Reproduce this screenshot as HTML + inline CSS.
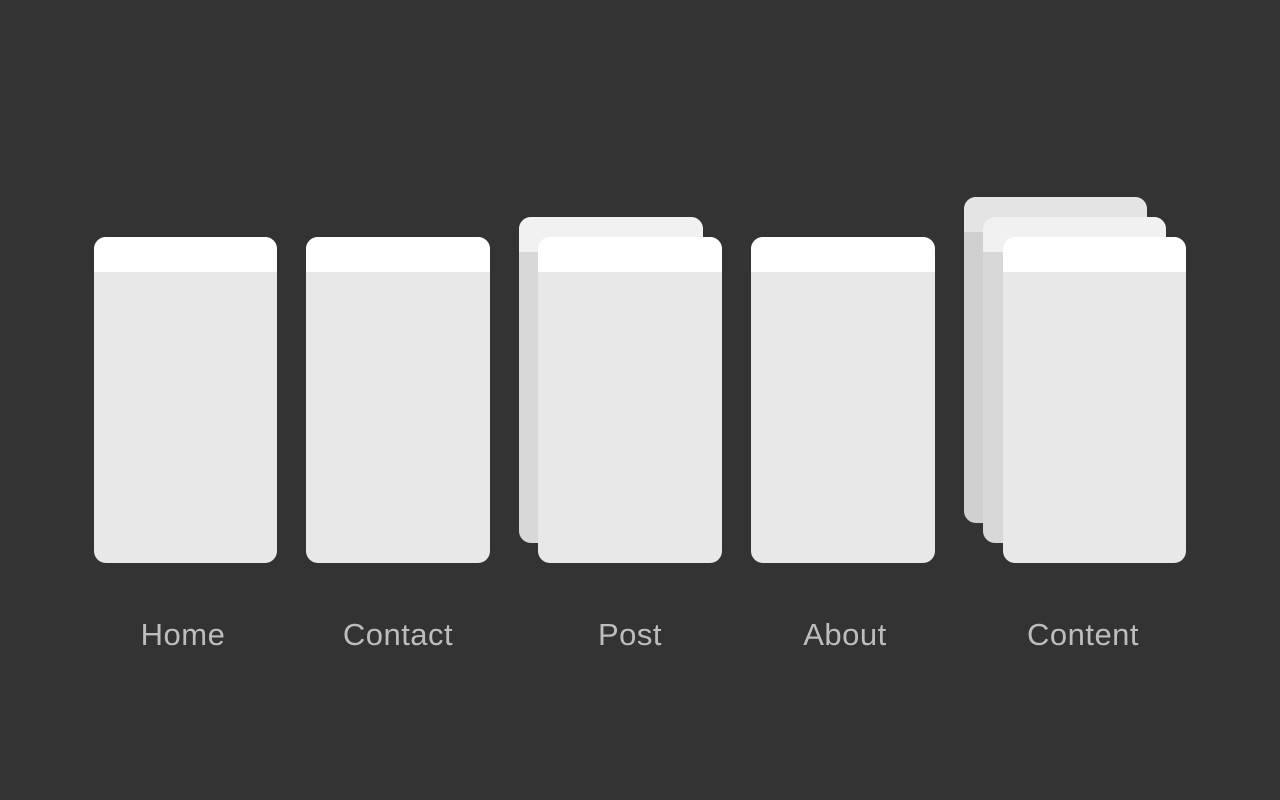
<!DOCTYPE html><html><head><style>
body{margin:0;width:1280px;height:800px;background:#333;position:relative;overflow:hidden;font-family:"Liberation Sans",sans-serif}
.c{position:absolute;width:183px;height:326px;border-radius:12px;overflow:hidden;background:#e8e8e8}
.c:before{content:"";position:absolute;left:0;top:0;right:0;height:35px;background:#fff}
.b1{background:#d8d8d8}.b1:before{background:#f1f1f1}
.b2{background:#d0d0d0}.b2:before{background:#e4e4e4}
.l{position:absolute;top:617px;font-size:31px;color:#bdbdbd;transform:translateX(-50%);letter-spacing:0.5px;white-space:nowrap}
</style></head><body>
<div class="c" style="left:94px;top:237px"></div>
<div class="c" style="left:306px;top:237px;width:184px"></div>
<div class="c b1" style="left:519px;top:217px;width:184px"></div>
<div class="c" style="left:538px;top:237px;width:184px"></div>
<div class="c" style="left:751px;top:237px;width:184px"></div>
<div class="c b2" style="left:964px;top:197px"></div>
<div class="c b1" style="left:983px;top:217px"></div>
<div class="c" style="left:1003px;top:237px"></div>
<div class="l" style="left:183px">Home</div>
<div class="l" style="left:398px">Contact</div>
<div class="l" style="left:630px">Post</div>
<div class="l" style="left:845px">About</div>
<div class="l" style="left:1083px">Content</div>
</body></html>
